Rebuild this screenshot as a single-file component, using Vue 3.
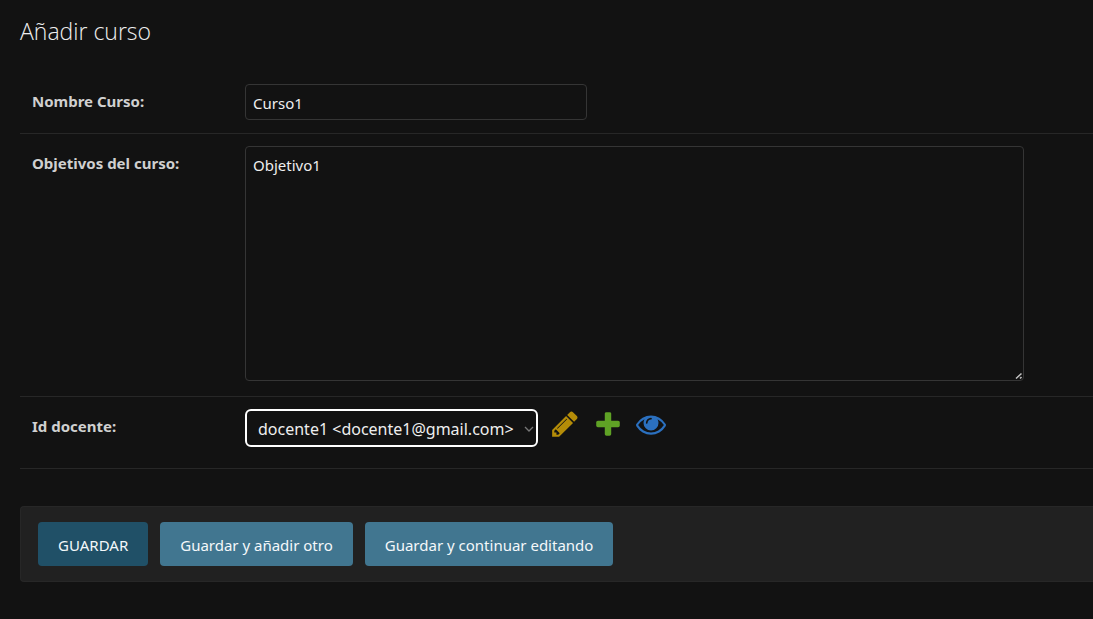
<script setup>
import { ref } from 'vue'

const nombre = ref('Curso1')
const objetivos = ref('Objetivo1')
const docente = ref('docente1')

const acciones = [
  {
    id: 'change',
    label: 'Modificar docente',
    path: 'M491 1536l91-91-235-235-91 91v107h128v128h107zm523-928q0-22-22-22-10 0-17 7l-542 542q-7 7-7 17 0 22 22 22 10 0 17-7l542-542q7-7 7-17zm-54-192l416 416-832 832h-416v-416zm683 96q0 53-37 90l-166 166-416-416 166-165q36-38 90-38 53 0 91 38l235 234q37 39 37 91z',
  },
  {
    id: 'add',
    label: 'Agregar docente',
    path: 'M1600 796v192q0 40-28 68t-68 28h-416v416q0 40-28 68t-68 28h-192q-40 0-68-28t-28-68v-416h-416q-40 0-68-28t-28-68v-192q0-40 28-68t68-28h416v-416q0-40 28-68t68-28h192q40 0 68 28t28 68v416h416q40 0 68 28t28 68z',
  },
  {
    id: 'view',
    label: 'Ver docente',
    path: 'M1664 960q-152-236-381-353 61 104 61 225 0 185-131.5 316.5t-316.5 131.5-316.5-131.5-131.5-316.5q0-121 61-225-229 117-381 353 133 205 333.5 326.5t434.5 121.5 434.5-121.5 333.5-326.5zm-720-384q0-20-14-34t-34-14q-125 0-214.5 89.5t-89.5 214.5q0 20 14 34t34 14 34-14 14-34q0-86 61-147t147-61q20 0 34-14t14-34zm848 384q0 34-20 69-140 230-376.5 368.5t-499.5 138.5-499.5-139-376.5-368q-20-35-20-69t20-69q140-229 376.5-368t499.5-139 499.5 139 376.5 368q20 35 20 69z',
  },
]
</script>

<template>
  <main class="content">
    <h1>Añadir curso</h1>
    <form @submit.prevent>
      <div class="row">
        <label for="id_nombre">Nombre Curso:</label>
        <input id="id_nombre" v-model="nombre" class="field" type="text">
      </div>
      <div class="row">
        <label for="id_objetivos">Objetivos del curso:</label>
        <div class="area">
          <textarea id="id_objetivos" v-model="objetivos" class="field"></textarea>
          <svg class="grip" viewBox="0 0 8 8" aria-hidden="true">
            <path d="M1 6.500L6.500 1.500M5 6.500L6.500 5" />
          </svg>
        </div>
      </div>
      <div class="row last">
        <label for="id_docente">Id docente:</label>
        <div class="related">
          <div class="picker">
            <select id="id_docente" v-model="docente">
              <option value="docente1">docente1 &lt;docente1@gmail.com&gt;</option>
            </select>
            <svg class="chevron" viewBox="0 0 10 6" aria-hidden="true">
              <path d="M1 1l4 4 4-4" />
            </svg>
          </div>
          <div class="links">
            <a v-for="a in acciones" :key="a.id" href="#" :class="a.id" :aria-label="a.label">
              <svg viewBox="0 0 1792 1792" aria-hidden="true"><path :d="a.path" /></svg>
            </a>
          </div>
        </div>
      </div>
      <div class="submit-row">
        <button class="primary" type="submit">GUARDAR</button>
        <button type="submit">Guardar y añadir otro</button>
        <button type="submit">Guardar y continuar editando</button>
      </div>
    </form>
  </main>
</template>

<style>
body {
  margin: 0;
  background: #121212;
}
</style>

<style scoped>
.content {
  padding: 13px 0 36px 20px;
  color: #eee;
  font-family: "Noto Sans", "Open Sans", sans-serif;
  font-size: 15px;
}
h1 {
  margin: 0 0 23px;
  font-family: "Open Sans", "Noto Sans", sans-serif;
  font-size: 23px;
  line-height: 36px;
  font-weight: 300;
}
.row {
  display: flex;
  align-items: flex-start;
  padding: 12px 0 13px 12px;
  border-bottom: 1px solid #272727;
}
.row + .row {
  padding-bottom: 15px;
}
.row.last {
  padding-bottom: 21px;
}
label {
  flex: 0 0 213px;
  padding-top: 5px;
  line-height: 24px;
  font-weight: 700;
  color: #d0d0d0;
}
.field {
  box-sizing: border-box;
  margin: 0;
  border: 1px solid #353535;
  border-radius: 4px;
  padding: 6px 7px;
  background: #121212;
  color: #eee;
  font: inherit;
  line-height: 24px;
  outline: none;
}
input.field {
  width: 342px;
  height: 36px;
  padding-top: 8px;
}
.area {
  position: relative;
  flex: 0 1 779px;
  margin-right: 20px;
}
textarea.field {
  display: block;
  width: 100%;
  height: 235px;
  resize: none;
}
.grip {
  position: absolute;
  right: 1px;
  bottom: 1px;
  width: 8px;
  height: 8px;
  fill: none;
  stroke: #c4c4c4;
  stroke-width: 1.5;
}
.related {
  display: flex;
  gap: 12px;
}
.links {
  display: flex;
  gap: 13px;
}
.picker {
  position: relative;
}
select {
  display: block;
  box-sizing: border-box;
  width: 293px;
  height: 38px;
  margin: 0;
  padding: 2px 20px 0 11px;
  border: 2px solid #fff;
  border-radius: 6px;
  appearance: none;
  background: #121212;
  color: #eee;
  font: inherit;
  font-size: 16px;
  outline: none;
}
.chevron {
  position: absolute;
  top: 17px;
  right: 4px;
  width: 10px;
  height: 6px;
  fill: none;
  stroke: #777;
  stroke-width: 1.3;
  pointer-events: none;
}
.links a,
.links svg {
  display: block;
  width: 30px;
  height: 30px;
}
.change {
  fill: #b48c08;
}
.add {
  fill: #5fa225;
}
.view {
  fill: #2b70bf;
}
.submit-row {
  display: flex;
  gap: 12px;
  margin-top: 37px;
  padding: 15px 17px;
  border: 1px solid #272727;
  border-right: 0;
  border-radius: 4px 0 0 4px;
  background: #212121;
}
button {
  height: 44px;
  margin: 0;
  padding: 2px 20px 0;
  border: 0;
  border-radius: 4px;
  background: #417690;
  color: #f4f8fa;
  font: inherit;
  white-space: nowrap;
}
button.primary {
  background: #205067;
}
</style>
